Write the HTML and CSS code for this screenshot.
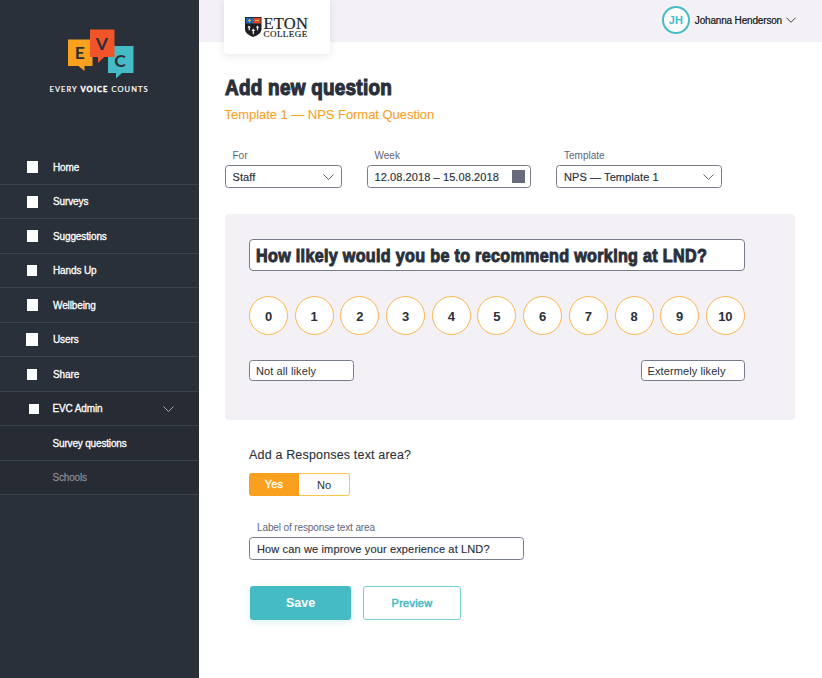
FILE: index.html
```html
<!DOCTYPE html>
<html lang="en">
<head>
<meta charset="utf-8">
<title>Every Voice Counts – Add new question</title>
<link rel="stylesheet" href="styles.css">
</head>
<body>
<aside class="sidebar">
  <div class="brand">
    <svg class="brand-mark" width="66" height="50" viewBox="0 0 66 50">
      <path fill="#f9a11f" d="M0 10.500h24.500v26.500h-8v5l-6-5H0z"/>
      <path fill="#45bbc5" d="M40 17h25.500v27H54l-6 5.500V44h-8z"/>
      <path fill="#f05428" d="M22 .5h24.500V28H36l-6 6v-6h-8z"/>
      <g font-family="Lato" font-weight="700" fill="#2a303a" text-anchor="middle">
        <text x="11.800" y="30" font-size="17.500">E</text>
        <text x="33.800" y="20.500" font-size="17.500">V</text>
        <text x="52" y="37.500" font-size="17.500">C</text>
      </g>
    </svg>
    <p class="tagline">EVERY <b>VOICE</b> COUNTS</p>
  </div>
  <nav class="nav">
    <a class="item"><i class="box"></i>Home</a>
    <a class="item"><i class="box"></i>Surveys</a>
    <a class="item"><i class="box"></i>Suggestions</a>
    <a class="item"><i class="box small"></i>Hands Up</a>
    <a class="item"><i class="box"></i>Wellbeing</a>
    <a class="item"><i class="box large"></i>Users</a>
    <a class="item"><i class="box small"></i>Share</a>
    <a class="item dark"><i class="box shifted"></i>EVC Admin
      <svg class="chev" width="11" height="6" viewBox="0 0 11 6"><path d="M.5.500l5 5 5-5"/></svg></a>
    <a class="item dark sub">Survey questions</a>
    <a class="item dark sub muted">Schools</a>
  </nav>
</aside>
<div class="page">
  <header class="topbar">
    <div class="school">
      <svg width="17" height="20" viewBox="0 0 17 20">
        <path fill="#1d1d22" d="M0 0h16.500v12c0 4-4 6.500-8.200 8C4 18.500 0 16 0 12z"/>
        <path fill="#2866a5" d="M.8.800h7.400v5.700H.8z"/>
        <path fill="#d34a2c" d="M8.200.800h7.500v5.700H8.200z"/>
        <path fill="#d7b84a" d="M4 2h1v1h1v1H5v1.500H4V4H3V3h1zM10 3h4v1h-4z"/>
        <path fill="#e8e8e8" d="M4 8.500l1.700 1.800-.8.700v2.300H3.600V11l-1-.7zM12.500 8.500l1.600 1.800-1 .7v2.300h-1.200V11l-1-.7zM8.300 11.500l1.800 2-1.100.8v3H7.700v-3l-1.200-.8z"/>
      </svg>
      <div class="school-name"><span class="eton">ETON</span><span class="college">COLLEGE</span></div>
    </div>
    <div class="user">
      <span class="avatar">JH</span>
      <span class="user-name">Johanna Henderson</span>
      <svg class="chev" width="10" height="6" viewBox="0 0 11 6"><path d="M.5.500l5 5 5-5"/></svg>
    </div>
  </header>
  <main class="main">
    <h1>Add new question</h1>
    <p class="subtitle">Template 1 — NPS Format Question</p>
    <div class="filters">
      <div class="field for">
        <label>For</label>
        <div class="control"><span>Staff</span><svg class="chev" width="11" height="6" viewBox="0 0 11 6"><path d="M.5.500l5 5 5-5"/></svg></div>
      </div>
      <div class="field week">
        <label>Week</label>
        <div class="control"><span>12.08.2018 – 15.08.2018</span><i class="calendar"></i></div>
      </div>
      <div class="field template">
        <label>Template</label>
        <div class="control"><span>NPS — Template 1</span><svg class="chev" width="11" height="6" viewBox="0 0 11 6"><path d="M.5.500l5 5 5-5"/></svg></div>
      </div>
    </div>
    <section class="panel">
      <div class="question"><span>How likely would you be to recommend working at LND?</span></div>
      <div class="scale">
        <span>0</span><span>1</span><span>2</span><span>3</span><span>4</span><span>5</span><span>6</span><span>7</span><span>8</span><span>9</span><span>10</span>
      </div>
      <div class="ends">
        <div class="end">Not all likely</div>
        <div class="end">Extermely likely</div>
      </div>
    </section>
    <section class="response">
      <p class="ask">Add a Responses text area?</p>
      <div class="toggle"><span class="on">Yes</span><span class="off">No</span></div>
      <label class="response-label">Label of response text area</label>
      <div class="control response-input">How can we improve your experience at LND?</div>
      <div class="actions">
        <button class="save">Save</button>
        <button class="preview">Preview</button>
      </div>
    </section>
  </main>
</div>
</body>
</html>
```
FILE: styles.css
```css
* { box-sizing: border-box; }
body {
  margin: 0;
  display: flex;
  width: 822px;
  height: 678px;
  overflow: hidden;
  background: #fff;
  color: #2a303a;
  font-family: "Liberation Sans", Arial, sans-serif;
}
p, h1 { margin: 0; }
.chev { fill: none; stroke: #5f6578; stroke-width: 1; flex: none; }

/* Sidebar */
.sidebar { width: 198.500px; flex: none; background: #2a303a; color: #fff; }
.brand { height: 150.300px; padding-top: 29px; }
.brand-mark { display: block; margin-left: 68px; }
.tagline {
  margin: 5px 0 0 49.500px;
  font: 400 7.500px/12px Lato, sans-serif;
  letter-spacing: 1.070px;
  white-space: nowrap;
  -webkit-text-stroke: .2px #fff;
}
.tagline b { font-weight: 900; -webkit-text-stroke: .3px #fff; }
.item {
  display: flex;
  align-items: center;
  height: 34.500px;
  padding: .5px 0 0 26px;
  border-bottom: 1px solid #3c424d;
  font-size: 10px;
  letter-spacing: -.12px;
  -webkit-text-stroke: .3px currentColor;
}
.item.dark { background: #262b34; }
.box { width: 11px; height: 12px; margin: 0 15px 0 1px; background: #fff; }
.box.small { width: 10px; height: 11px; margin-right: 16px; }
.box.large { width: 12px; height: 13px; margin: 0 15px 0 0; }
.box.shifted { width: 10px; height: 10px; margin: 0 14px 0 2.500px; }
.item .chev { margin-left: auto; margin-right: 25px; stroke: #a2a5ac; }
.item.sub { padding-left: 52.500px; letter-spacing: -.17px; }
.item.muted { color: #84878d; }

/* Header */
.page { flex: 1; min-width: 0; }
.topbar {
  display: flex;
  justify-content: space-between;
  align-items: flex-start;
  height: 42px;
  padding: 0 26px 0 25.500px;
  background: #f3f1f5;
}
.school {
  display: flex;
  gap: 1.500px;
  width: 106px;
  height: 54px;
  padding: 17px 0 0 21px;
  background: #fff;
  border-radius: 0 0 4px 4px;
  box-shadow: 0 2px 8px rgba(42, 48, 58, .1);
}
.school-name { display: flex; flex-direction: column; font-family: "Liberation Serif", serif; color: #222; }
.eton { font-size: 16.500px; line-height: 13px; letter-spacing: .2px; -webkit-text-stroke: .2px #222; }
.college { font-size: 9px; line-height: 9px; letter-spacing: .45px; -webkit-text-stroke: .2px #222; }
.user { display: flex; align-items: center; height: 40px; font-size: 10px; color: #111; }
.avatar {
  width: 28px;
  height: 28px;
  margin-right: 5px;
  border: 2px solid #45bbc5;
  border-radius: 50%;
  background: #fff;
  color: #45bbc5;
  font: bold 11px/25px "Liberation Sans", sans-serif;
  text-align: center;
}
.user-name { letter-spacing: -.17px; -webkit-text-stroke: .2px #111; }
.user .chev { margin-left: 4px; stroke: #333; }

/* Content */
.main { padding: 33px 27px 0 26px; }
h1 {
  width: max-content;
  font-size: 22px;
  line-height: 25px;
  font-weight: bold;
  letter-spacing: .3px;
  -webkit-text-stroke: 1.200px #2a303a;
  transform: scaleX(.86);
  transform-origin: 0 0;
}
.subtitle { margin-top: 7px; font-size: 13px; line-height: 16px; color: #f9a11f; letter-spacing: -.04px; -webkit-text-stroke: .1px #f9a11f; }
.filters { display: flex; margin-top: 25px; }
.field label { display: block; padding-left: 8px; font-size: 10px; line-height: 15px; color: #5f6578; }
.for { width: 117px; margin-right: 25px; }
.week { width: 164px; margin-right: 25.500px; }
.template { width: 165.500px; }
.control {
  display: flex;
  align-items: center;
  justify-content: space-between;
  height: 23px;
  margin-top: 2px;
  padding: 0 7px;
  border: 1px solid #777c8d;
  border-radius: 3.500px;
  background: #fff;
  font-size: 11px;
  letter-spacing: .09px;
  white-space: nowrap;
  -webkit-text-stroke: .15px currentColor;
}
.calendar { width: 13px; height: 13px; margin-right: -2px; background: #666b7e; }
.panel {
  height: 206px;
  margin-top: 26px;
  padding: 25px 50px 0 24.500px;
  background: #f3f1f5;
  border-radius: 4px;
}
.question {
  height: 32px;
  padding-left: 6px;
  border: 1px solid #777c8d;
  border-radius: 4px;
  background: #fff;
  font-size: 18.500px;
  line-height: 31px;
  font-weight: bold;
  white-space: nowrap;
}
.question span { display: inline-block; letter-spacing: .35px; transform: scaleX(.873); transform-origin: 0 50%; -webkit-text-stroke: 1px #2a303a; }
.scale { display: flex; justify-content: space-between; margin-top: 25px; }
.scale span {
  width: 39px;
  height: 39px;
  border: 1px solid #fbb650;
  border-radius: 50%;
  background: #fff;
  font-size: 13px;
  line-height: 39px;
  font-weight: bold;
  text-align: center;
}
.ends { display: flex; justify-content: space-between; margin-top: 25px; }
.end {
  width: 104.500px;
  height: 21px;
  padding-left: 6px;
  border: 1px solid #777c8d;
  border-radius: 3.500px;
  background: #fff;
  font-size: 11px;
  line-height: 20px;
  letter-spacing: .1px;
}
.response { padding: 26px 0 0 24.500px; }
.ask { font-size: 12.500px; line-height: 19px; letter-spacing: .17px; -webkit-text-stroke: .1px currentColor; }
.toggle { display: flex; width: 101px; height: 23px; margin-top: 8px; font-size: 11px; line-height: 23px; text-align: center; }
.on { flex: 1; background: #f9a11f; color: #fff; border-radius: 3px 0 0 3px; letter-spacing: .2px; -webkit-text-stroke: .3px #fff; }
.off { flex: 1; border: 1px solid #fbc64c; border-left: 0; border-radius: 0 3px 3px 0; line-height: 22px; }
.response-label { display: block; margin-top: 24px; padding-left: 8px; font-size: 10px; line-height: 15px; letter-spacing: -.12px; color: #5f6578; }
.response-input { width: 275px; margin-top: 2px; letter-spacing: .14px; }
.actions { display: flex; gap: 12px; margin-top: 26px; }
button { height: 34px; padding: 0; border-radius: 3px; font-family: inherit; }
.save {
  width: 101px;
  margin-left: 1px;
  border: 0;
  background: #45bbc5;
  color: #fff;
  font-size: 12.500px;
  font-weight: bold;
  box-shadow: 0 2px 7px rgba(69, 187, 197, .2);
}
.preview { width: 98px; border: 1px solid #74ced4; background: #fff; color: #45bbc5; font-size: 11px; letter-spacing: .25px; -webkit-text-stroke: .5px #45bbc5; }
```
